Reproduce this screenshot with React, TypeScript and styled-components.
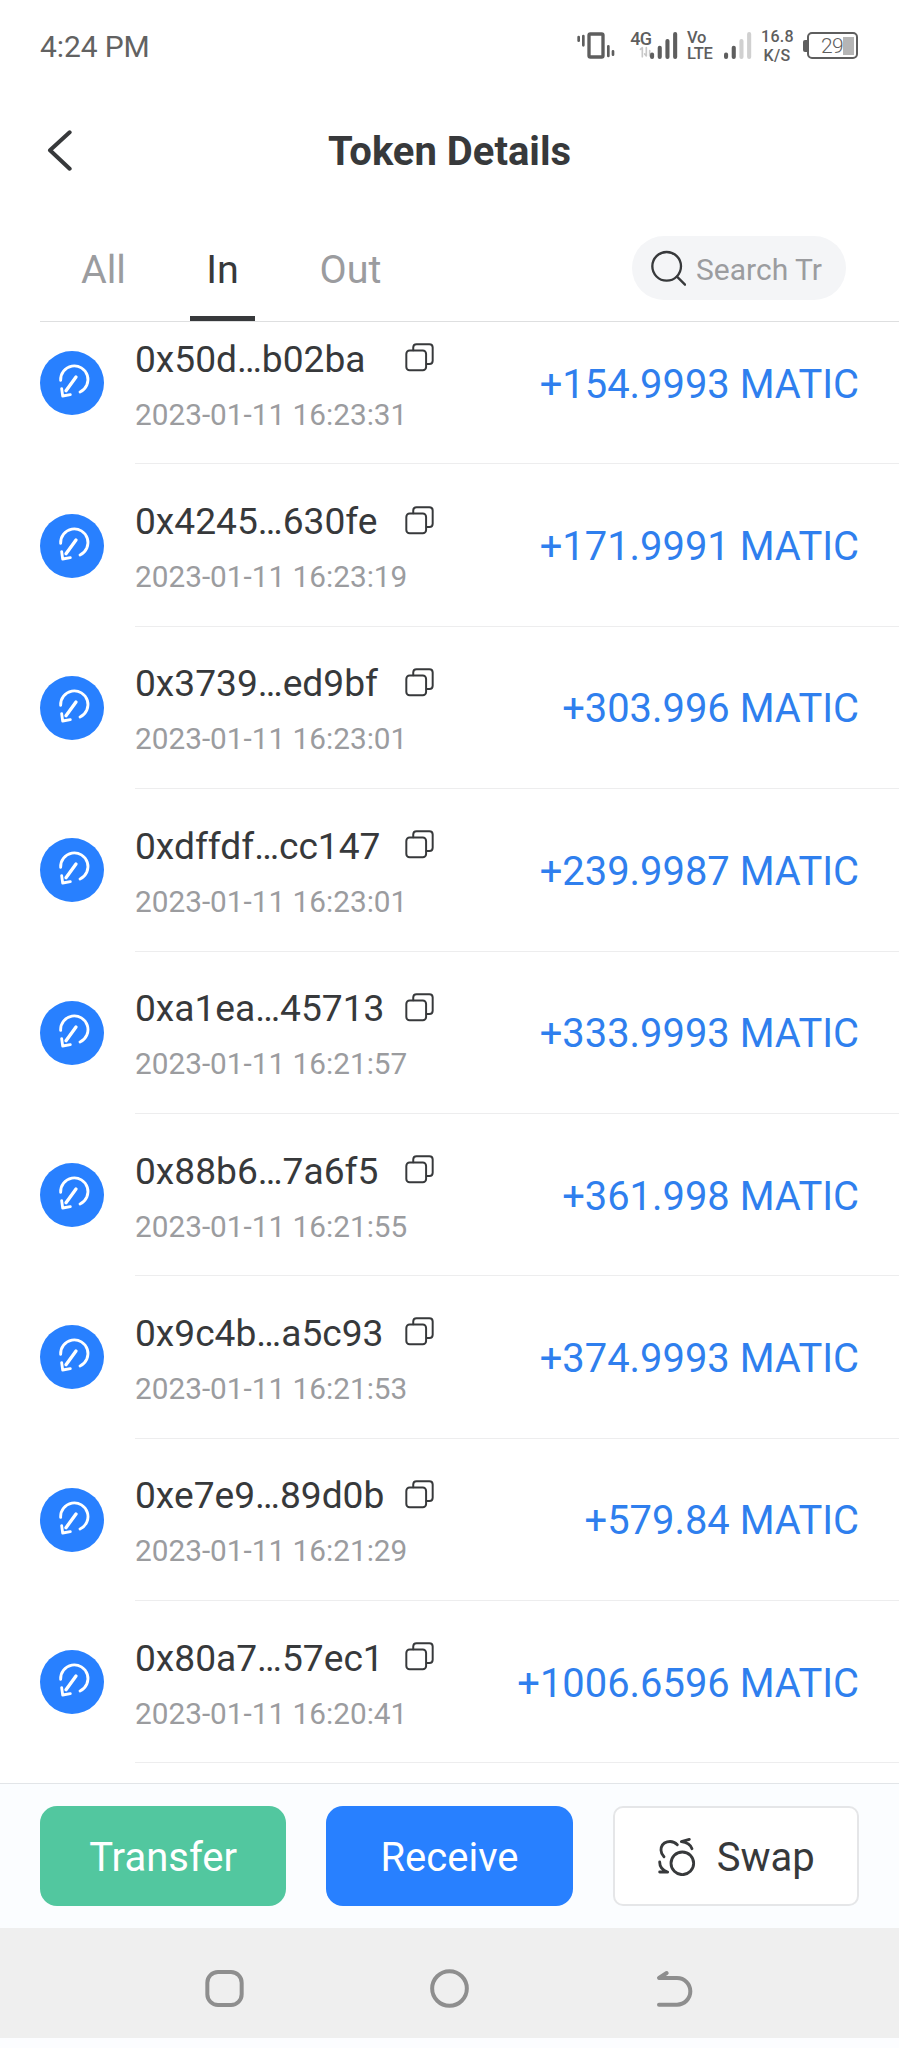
import React from "react";
import styled, { createGlobalStyle } from "styled-components";

const GlobalStyle = createGlobalStyle`
  * { box-sizing: border-box; }
  body { margin: 0; background: #fcfdff; }
  button { font: inherit; border: 0; padding: 0; background: none; }
`;

const ink = "#37393b";
const muted = "#9b9c9f";
const blue = "#2880ff";
const statusInk = "#5e5e5e";

const Screen = styled.div`
  width: 899px;
  height: 2048px;
  display: flex;
  flex-direction: column;
  overflow: hidden;
  background: #fff;
  font-family: Roboto, "Liberation Sans", sans-serif;
  color: ${ink};
`;

const Icon = styled.svg`
  display: block;
  flex: none;
  fill: none;
  stroke: currentColor;
  stroke-linecap: round;
  stroke-linejoin: round;
`;

/* Status bar */
const StatusBar = styled.div`
  flex: none;
  height: 91px;
  padding: 0 41px 0 40px;
  display: flex;
  align-items: center;
  justify-content: space-between;
  color: ${statusInk};
`;
const Clock = styled.span`
  font-size: 30px;
  line-height: 36px;
  letter-spacing: -0.1px;
  padding-top: 2px;
  color: #626262;
`;
const StatusIcons = styled.div`
  display: flex;
  align-items: center;
`;
const NetworkBadge = styled.div`
  width: 20px;
  height: 27px;
  margin-left: 16px;
  display: flex;
  flex-direction: column;
  align-items: flex-end;
  font-size: 18px;
  line-height: 14px;
  font-weight: 500;
  letter-spacing: -0.9px;
`;
const StackedLabel = styled.div<{ $w: number; $size: number; $gap: number; $line: number; $track: number }>`
  width: ${(p) => p.$w}px;
  margin-left: ${(p) => p.$gap}px;
  display: flex;
  flex-direction: column;
  font-size: ${(p) => p.$size}px;
  line-height: ${(p) => p.$line}px;
  letter-spacing: ${(p) => p.$track}px;
  font-weight: 500;
  white-space: nowrap;
`;
const Centered = styled.span`
  text-align: center;
`;
const BarsSlot = styled.div<{ $gap: number }>`
  margin-left: ${(p) => p.$gap}px;
`;
const Battery = styled.div`
  margin-left: 10px;
  display: flex;
  align-items: center;
`;
const BatteryNub = styled.div`
  width: 4px;
  height: 12px;
  border-radius: 2px 0 0 2px;
  background: ${statusInk};
`;
const BatteryBody = styled.div`
  width: 51px;
  height: 27px;
  border: 2px solid ${statusInk};
  border-radius: 5px;
  padding: 0 2px 0 12px;
  display: flex;
  align-items: center;
  font-size: 21px;
  line-height: 22px;
  font-weight: 300;
  letter-spacing: -0.7px;
`;
const BatteryFill = styled.div`
  flex: none;
  width: 11px;
  height: 18px;
  background: #b5b5b5;
`;

/* Title bar and tabs */
const TitleBar = styled.header`
  flex: none;
  height: 120px;
  padding: 0 40px;
  display: grid;
  grid-template-columns: 60px 1fr 60px;
  align-items: center;
`;
const BackButton = styled.button`
  padding: 0 0 3px 6px;
  color: ${ink};
`;
const Title = styled.h1`
  margin: 0;
  text-align: center;
  font-size: 40px;
  line-height: 48px;
  font-weight: 700;
  padding-top: 1px;
`;
const FilterBar = styled.div`
  flex: none;
  height: 111px;
  margin-left: 40px;
  padding-right: 53px;
  border-bottom: 1px solid #dedfe0;
  display: flex;
  justify-content: space-between;
`;
const Tabs = styled.nav`
  display: flex;
`;
const Tab = styled.button<{ $active?: boolean; $w: number; $shift?: number }>`
  width: ${(p) => p.$w}px;
  height: 110px;
  padding-top: 35px;
  padding-left: ${(p) => p.$shift ?? 0}px;
  display: flex;
  flex-direction: column;
  align-items: center;
  justify-content: space-between;
  font-size: 39.5px;
  line-height: 48px;
  color: ${(p) => (p.$active ? ink : muted)};
  &::after {
    content: "";
    width: 65px;
    height: 5px;
    background: ${(p) => (p.$active ? ink : "transparent")};
  }
`;
const SearchBox = styled.div`
  width: 214px;
  height: 64px;
  margin-top: 25px;
  padding: 0 18px;
  border-radius: 32px;
  background: #f4f5f7;
  display: flex;
  align-items: center;
  gap: 10px;
`;
const SearchText = styled.span`
  padding-top: 3px;
  font-size: 30px;
  line-height: 36px;
  color: ${muted};
  white-space: nowrap;
`;

/* Transactions */
const List = styled.main`
  flex: 1;
  min-height: 0;
  overflow: hidden;
`;
const Row = styled.article`
  height: 162.375px;
  padding-left: 40px;
  display: flex;
  align-items: center;
  &:first-child { margin-top: -20px; }
`;
const Direction = styled.div`
  flex: none;
  width: 64px;
  height: 64px;
  border-radius: 50%;
  background: ${blue};
  color: #fff;
`;
const RowBody = styled.div`
  flex: 1;
  height: 100%;
  margin-left: 31px;
  padding-right: 40px;
  border-bottom: 1px solid #ededee;
  display: flex;
  align-items: center;
  justify-content: space-between;
`;
const Details = styled.div`
  display: flex;
  flex-direction: column;
  gap: 13px;
  padding-top: 7px;
`;
const HashLine = styled.div`
  display: flex;
  align-items: center;
`;
const Hash = styled.span`
  width: 270px;
  font-size: 37.15px;
  line-height: 44px;
`;
const CopyButton = styled.button`
  padding-bottom: 4px;
  color: ${ink};
`;
const Time = styled.time`
  font-size: 29.75px;
  line-height: 40px;
  color: ${muted};
`;
const Amount = styled.span`
  padding-top: 4px;
  font-size: 39.9px;
  line-height: 48px;
  color: #2f7fee;
`;

/* Footer */
const Actions = styled.footer`
  flex: none;
  height: 145px;
  padding: 22px 40px;
  border-top: 1px solid #e2e5e8;
  background: #fbfdff;
  display: grid;
  grid-template-columns: repeat(3, 1fr);
  gap: 40px;
`;
const Action = styled.button<{ $bg: string; $outlined?: boolean }>`
  height: 100px;
  padding-top: 4px;
  border-radius: ${(p) => (p.$outlined ? 10 : 17)}px;
  border: ${(p) => (p.$outlined ? "2px solid #e5e6e8" : "0")};
  background: ${(p) => p.$bg};
  color: ${(p) => (p.$outlined ? ink : "#fff")};
  display: flex;
  align-items: center;
  justify-content: center;
  gap: 20px;
  font-size: 40px;
  line-height: 48px;
  svg { margin-bottom: 5px; }
`;
const SystemNav = styled.div`
  flex: none;
  height: 110px;
  margin-bottom: 10px;
  padding: 10px 112.4px 0;
  background: #efefef;
  display: grid;
  grid-template-columns: repeat(3, 1fr);
  align-items: center;
  justify-items: center;
  color: #8e8e8e;
`;
const Bottom = styled.div`
  flex: none;
  background: #fcfdff;
`;

const Bars = styled.svg`
  display: block;
`;

const SignalBars = ({ active }: { active: number }) => {
  const tops = [20.5, 13.8, 7, 0];
  return (
    <Bars width="28" height="27" viewBox="0 0 28 27">
      {tops.map((y, i) => (
        <rect key={y} x={i * 7.7} y={y} width="4.1" height={27 - y} rx="2" fill={i < active ? statusInk : "#d0d0d0"} />
      ))}
    </Bars>
  );
};

const ReceiveIcon = () => (
  <Icon width="64" height="64" viewBox="0 0 192 192" strokeWidth="8.5">
    <path d="M62 88A41 41 0 1 1 120 123" />
    <path d="M108 78L78 119" strokeWidth="10" />
    <path d="M65 113L68 135L91 131" />
  </Icon>
);

const CopyIcon = () => (
  <Icon width="29" height="29" viewBox="0 0 88 88" strokeWidth="6">
    <rect x="4" y="23" width="60" height="60" rx="10" />
    <path d="M25 22V14Q25 4 35 4H74Q84 4 84 14V54Q84 64 74 64H66" />
  </Icon>
);

const SwapIcon = () => (
  <Icon width="40" height="40" viewBox="0 0 120 120" strokeWidth="8.5">
    <circle cx="76" cy="82" r="34" />
    <path d="M61 26C45 10 12 14 12 43C12 50 15 56 21 62" />
    <path d="M97 10L73 17C90 19 101 27 105 38" />
    <path d="M8 78C8 94 17 103 32 108H8" />
  </Icon>
);

const transactions = [
  ["0x50d…b02ba", "2023-01-11 16:23:31", "+154.9993"],
  ["0x4245…630fe", "2023-01-11 16:23:19", "+171.9991"],
  ["0x3739…ed9bf", "2023-01-11 16:23:01", "+303.996"],
  ["0xdffdf…cc147", "2023-01-11 16:23:01", "+239.9987"],
  ["0xa1ea…45713", "2023-01-11 16:21:57", "+333.9993"],
  ["0x88b6…7a6f5", "2023-01-11 16:21:55", "+361.998"],
  ["0x9c4b…a5c93", "2023-01-11 16:21:53", "+374.9993"],
  ["0xe7e9…89d0b", "2023-01-11 16:21:29", "+579.84"],
  ["0x80a7…57ec1", "2023-01-11 16:20:41", "+1006.6596"],
];

export default function App() {
  return (
    <Screen>
      <GlobalStyle />
      <StatusBar>
        <Clock>4:24 PM</Clock>
        <StatusIcons>
          <Icon width="38" height="27" viewBox="0 0 114 81" strokeWidth="8">
            <rect x="36" y="6" width="42" height="69" rx="4" strokeWidth="10" />
            <path d="M19 12V40M5 15V26M94 43V72M108 58V68" />
          </Icon>
          <NetworkBadge>
            <span>4G</span>
            <Icon width="12" height="12" viewBox="0 0 36 36" strokeWidth="5" color="#c8c8c8">
              <path d="M4 10L10 5V32M22 5V30L17 24M32 14V30" />
            </Icon>
          </NetworkBadge>
          <BarsSlot $gap={-1}>
            <SignalBars active={4} />
          </BarsSlot>
          <StackedLabel $w={26} $size={16.5} $gap={9} $line={16} $track={-0.2}>
            <span>Vo</span>
            <span>LTE</span>
          </StackedLabel>
          <BarsSlot $gap={11}>
            <SignalBars active={2} />
          </BarsSlot>
          <StackedLabel $w={32} $size={16} $gap={9} $line={19} $track={0.3}>
            <Centered>16.8</Centered>
            <Centered>K/S</Centered>
          </StackedLabel>
          <Battery>
            <BatteryNub />
            <BatteryBody>
              29
              <BatteryFill />
            </BatteryBody>
          </Battery>
        </StatusIcons>
      </StatusBar>

      <TitleBar>
        <BackButton aria-label="Back">
          <Icon width="27" height="42" viewBox="0 0 81 126" strokeWidth="12">
            <path d="M71 10L12 64L71 119" />
          </Icon>
        </BackButton>
        <Title>Token Details</Title>
      </TitleBar>

      <FilterBar>
        <Tabs>
          <Tab $w={125} $shift={2}>All</Tab>
          <Tab $w={115} $active>In</Tab>
          <Tab $w={141}>Out</Tab>
        </Tabs>
        <SearchBox>
          <Icon width="36" height="36" viewBox="0 0 108 108" strokeWidth="7">
            <circle cx="50" cy="49" r="43" />
            <path d="M81 80L105 104" />
          </Icon>
          <SearchText>Search Tr</SearchText>
        </SearchBox>
      </FilterBar>

      <List>
        {transactions.map(([hash, time, amount]) => (
          <Row key={hash}>
            <Direction>
              <ReceiveIcon />
            </Direction>
            <RowBody>
              <Details>
                <HashLine>
                  <Hash>{hash}</Hash>
                  <CopyButton aria-label="Copy">
                    <CopyIcon />
                  </CopyButton>
                </HashLine>
                <Time>{time}</Time>
              </Details>
              <Amount>{amount} MATIC</Amount>
            </RowBody>
          </Row>
        ))}
      </List>

      <Bottom>
        <Actions>
          <Action $bg="#52c79f">Transfer</Action>
          <Action $bg={blue}>Receive</Action>
          <Action $bg="#fff" $outlined>
            <SwapIcon />
            Swap
          </Action>
        </Actions>
        <SystemNav>
          <Icon width="39" height="39" viewBox="0 0 117 117" strokeWidth="12">
            <rect x="7" y="9" width="103" height="99" rx="32" />
          </Icon>
          <Icon width="39" height="39" viewBox="0 0 117 117" strokeWidth="12">
            <circle cx="58.5" cy="58.5" r="52" />
          </Icon>
          <Icon width="39" height="39" viewBox="0 0 117 117" strokeWidth="12">
            <path d="M35 12L12 27H66A40 40 0 0 1 66 107H12" />
          </Icon>
        </SystemNav>
      </Bottom>
    </Screen>
  );
}
